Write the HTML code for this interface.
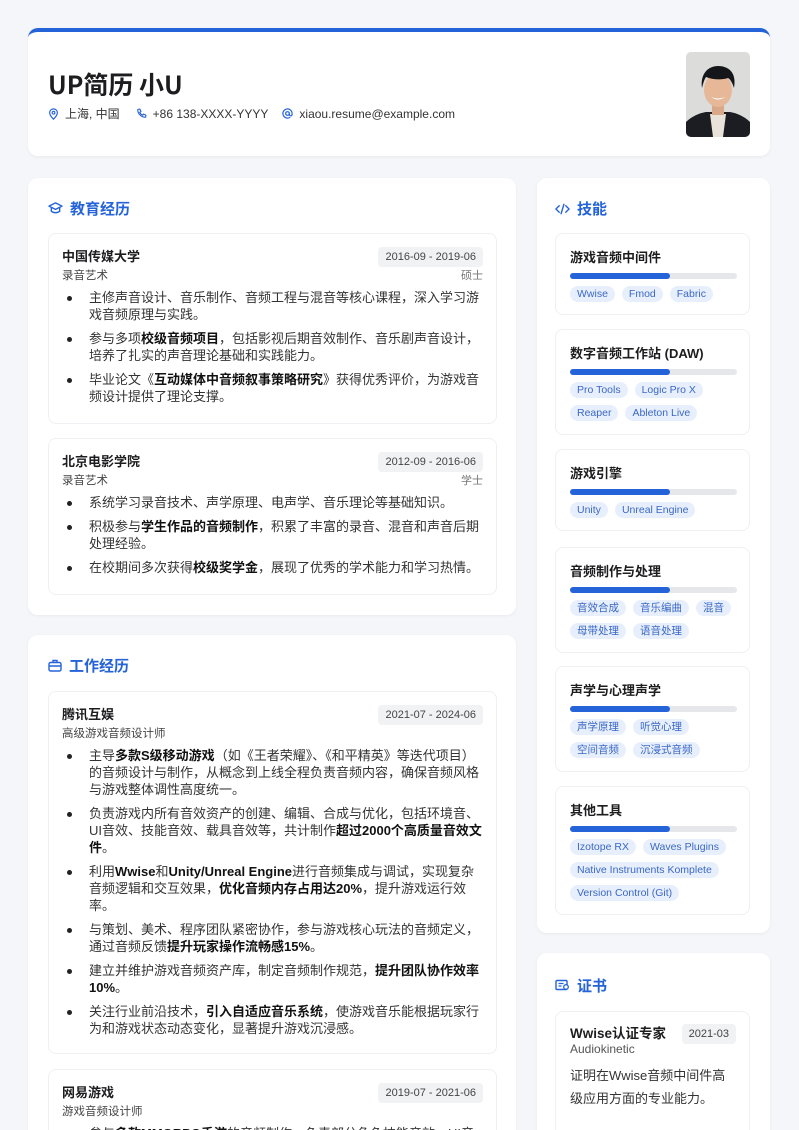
<!DOCTYPE html>
<html><head><meta charset="utf-8">
<style>
*{box-sizing:border-box;margin:0;padding:0}
html,body{width:799px;height:1130px;overflow:hidden}
body{background:#f4f6f9;font-family:"Liberation Sans","Noto Sans CJK SC",sans-serif;color:#222;position:relative}
.card{position:absolute;background:#fff;border-radius:10px;box-shadow:0 1px 3px rgba(0,0,0,.05)}
.hdr{left:28px;top:28px;width:742px;height:128px;border-top:4px solid #2563d9}
.name{position:absolute;left:20px;top:34px;font-size:25px;font-weight:bold;color:#1d1d1f;font-family:"Noto Sans CJK SC",sans-serif}
.contact{position:absolute;left:20px;top:73px;font-size:12px;color:#333;display:flex;gap:14px;align-items:center}
.contact span{display:flex;align-items:center;gap:6px}
.photo{position:absolute;left:658px;top:20px;width:64px;height:85px;border-radius:5px;overflow:hidden;background:#d8d8d6}
.sec-t{position:absolute;left:20px;font-size:15px;font-weight:bold;color:#2563d9;display:flex;align-items:center;gap:7px}
.ent{position:absolute;left:20px;width:449px;border:1px solid #eef0f3;border-radius:8px;overflow:hidden}
.et{position:absolute;left:13px;top:14px;line-height:18px;font-size:13px;font-weight:bold;color:#1d1d1f}
.es{position:absolute;left:13px;top:34px;line-height:16px;font-size:11.5px;color:#444}
.date{position:absolute;right:13px;top:13px;background:#f1f2f4;border-radius:4px;font-size:11px;color:#444;padding:2px 7px;line-height:16px}
.deg{position:absolute;right:13px;top:34px;line-height:16px;font-size:11px;color:#777}
ul{position:absolute;left:13px;top:55px;width:425px;list-style:none}
li{position:relative;padding-left:27px;font-size:13px;line-height:17px;color:#333;margin-bottom:7px}
li:before{content:"";position:absolute;left:5px;top:7px;width:5px;height:5px;border-radius:50%;background:#222}
b{color:#111}
.sk{position:absolute;left:18px;width:195px;border:1px solid #eef0f3;border-radius:8px}
.sk h4{position:absolute;left:14px;top:13px;font-size:13px;font-weight:bold;color:#1d1d1f}
.bar{position:absolute;left:14px;top:39px;width:167px;height:6px;border-radius:3px;background:#e5e7eb}
.bar i{display:block;width:100px;height:6px;border-radius:3px;background:#2563d9}
.tags{position:absolute;left:14px;top:52px;width:175px;display:flex;flex-wrap:wrap;gap:7px 7px}
.tags span{background:#e8effc;color:#3a68c4;font-size:10.5px;line-height:16px;padding:0 7px;border-radius:8px}
</style></head><body>

<div class="card hdr">
 <div class="name">UP简历 小U</div>
 <div class="contact">
  <span><svg width="11" height="12" viewBox="0 0 12 14"><path d="M6 13s4.5-4.5 4.5-7.5a4.5 4.5 0 0 0-9 0C1.5 8.5 6 13 6 13z" fill="none" stroke="#2563d9" stroke-width="1.4"/><circle cx="6" cy="5.5" r="1.6" fill="none" stroke="#2563d9" stroke-width="1.3"/></svg>上海, 中国</span>
  <span style="margin-left:2px"><svg width="11" height="11" viewBox="0 0 12 12"><path d="M2 1.5l2.2-.3 1.2 2.6-1.3 1a7 7 0 0 0 3.1 3.1l1-1.3 2.6 1.2-.3 2.2C6 10.5 1.5 6 2 1.5z" fill="none" stroke="#2563d9" stroke-width="1.2"/></svg>+86 138-XXXX-YYYY</span>
  <span><svg width="11" height="11" viewBox="0 0 12 12"><circle cx="6" cy="6" r="2" fill="none" stroke="#2563d9" stroke-width="1.3"/><path d="M8 6v1a1.5 1.5 0 0 0 3 0V6a5 5 0 1 0-2 4" fill="none" stroke="#2563d9" stroke-width="1.3"/></svg>xiaou.resume@example.com</span>
 </div>
 <div class="photo">
  <svg width="64" height="85" viewBox="0 0 64 85">
   <rect width="64" height="85" fill="#dcdcda"/>
   <path d="M0 85V70c6-6 14-9 20-10h24c6 1 14 4 20 10v15z" fill="#1b1d22"/>
   <path d="M24 62h16l-3 23h-10z" fill="#e8e2d8"/>
   <rect x="26" y="50" width="12" height="13" fill="#d9a888"/>
   <ellipse cx="32" cy="38" rx="14" ry="17" fill="#e6b898"/>
   <path d="M16 36c-2-14 6-22 16-22s19 6 16 22c-2-6-4-9-6-10-6 2-14 2-22-1-2 3-3 7-4 11z" fill="#15161a"/>
   <path d="M25 45q7 5 14 0q-7 3-14 0z" fill="#fff"/>
  </svg>
 </div>
</div>

<!-- Education -->
<div class="card" style="left:28px;top:178px;width:488px;height:437px">
 <div class="sec-t" style="top:20px"><svg width="15" height="13" viewBox="0 0 16 14"><path d="M8 1L1 4.5 8 8l7-3.5z M3.5 6v4c2.5 2 6.5 2 9 0V6" fill="none" stroke="#2563d9" stroke-width="1.5" stroke-linejoin="round"/></svg>教育经历</div>
 <div class="ent" style="top:55px;height:191px">
  <div class="et">中国传媒大学</div><div class="date">2016-09 - 2019-06</div>
  <div class="es">录音艺术</div><div class="deg">硕士</div>
  <ul>
   <li>主修声音设计、音乐制作、音频工程与混音等核心课程，深入学习游戏音频原理与实践。</li>
   <li>参与多项<b>校级音频项目</b>，包括影视后期音效制作、音乐剧声音设计，培养了扎实的声音理论基础和实践能力。</li>
   <li>毕业论文《<b>互动媒体中音频叙事策略研究</b>》获得优秀评价，为游戏音频设计提供了理论支撑。</li>
  </ul>
 </div>
 <div class="ent" style="top:260px;height:157px">
  <div class="et">北京电影学院</div><div class="date">2012-09 - 2016-06</div>
  <div class="es">录音艺术</div><div class="deg">学士</div>
  <ul>
   <li>系统学习录音技术、声学原理、电声学、音乐理论等基础知识。</li>
   <li>积极参与<b>学生作品的音频制作</b>，积累了丰富的录音、混音和声音后期处理经验。</li>
   <li>在校期间多次获得<b>校级奖学金</b>，展现了优秀的学术能力和学习热情。</li>
  </ul>
 </div>
</div>

<!-- Work -->
<div class="card" style="left:28px;top:635px;width:488px;height:520px">
 <div class="sec-t" style="top:20px"><svg width="14" height="13" viewBox="0 0 14 13"><rect x="1" y="3.5" width="12" height="8.5" rx="1.5" fill="none" stroke="#2563d9" stroke-width="1.4"/><path d="M5 3.5V1.5h4v2M1 7h12" fill="none" stroke="#2563d9" stroke-width="1.4"/></svg>工作经历</div>
 <div class="ent" style="top:56px;height:363px">
  <div class="et">腾讯互娱</div><div class="date">2021-07 - 2024-06</div>
  <div class="es">高级游戏音频设计师</div>
  <ul>
   <li>主导<b>多款S级移动游戏</b>（如《王者荣耀》、《和平精英》等迭代项目）的音频设计与制作，从概念到上线全程负责音频内容，确保音频风格与游戏整体调性高度统一。</li>
   <li>负责游戏内所有音效资产的创建、编辑、合成与优化，包括环境音、UI音效、技能音效、载具音效等，共计制作<b>超过2000个高质量音效文件</b>。</li>
   <li>利用<b>Wwise</b>和<b>Unity/Unreal Engine</b>进行音频集成与调试，实现复杂音频逻辑和交互效果，<b>优化音频内存占用达20%</b>，提升游戏运行效率。</li>
   <li>与策划、美术、程序团队紧密协作，参与游戏核心玩法的音频定义，通过音频反馈<b>提升玩家操作流畅感15%</b>。</li>
   <li>建立并维护游戏音频资产库，制定音频制作规范，<b>提升团队协作效率10%</b>。</li>
   <li>关注行业前沿技术，<b>引入自适应音乐系统</b>，使游戏音乐能根据玩家行为和游戏状态动态变化，显著提升游戏沉浸感。</li>
  </ul>
 </div>
 <div class="ent" style="top:434px;height:120px">
  <div class="et">网易游戏</div><div class="date">2019-07 - 2021-06</div>
  <div class="es">游戏音频设计师</div>
  <ul>
   <li>参与<b>多款MMORPG手游</b>的音频制作，负责部分角色技能音效、UI音效。</li>
  </ul>
 </div>
</div>

<!-- Skills -->
<div class="card" style="left:537px;top:178px;width:233px;height:755px">
 <div class="sec-t" style="top:20px;left:18px"><svg width="15" height="12" viewBox="0 0 16 12"><path d="M4.5 2.5L1 6l3.5 3.5M11.5 2.5L15 6l-3.5 3.5M9.5 1L6.5 11" fill="none" stroke="#2563d9" stroke-width="1.5" stroke-linecap="round"/></svg>技能</div>
 <div class="sk" style="top:55px;height:82px"><h4>游戏音频中间件</h4><div class="bar"><i></i></div><div class="tags"><span>Wwise</span><span>Fmod</span><span>Fabric</span></div></div>
 <div class="sk" style="top:151px;height:106px"><h4>数字音频工作站 (DAW)</h4><div class="bar"><i></i></div><div class="tags"><span>Pro Tools</span><span>Logic Pro X</span><span>Reaper</span><span>Ableton Live</span></div></div>
 <div class="sk" style="top:271px;height:82px"><h4>游戏引擎</h4><div class="bar"><i></i></div><div class="tags"><span>Unity</span><span>Unreal Engine</span></div></div>
 <div class="sk" style="top:369px;height:106px"><h4>音频制作与处理</h4><div class="bar"><i></i></div><div class="tags"><span>音效合成</span><span>音乐编曲</span><span>混音</span><span>母带处理</span><span>语音处理</span></div></div>
 <div class="sk" style="top:488px;height:106px"><h4>声学与心理声学</h4><div class="bar"><i></i></div><div class="tags"><span>声学原理</span><span>听觉心理</span><span>空间音频</span><span>沉浸式音频</span></div></div>
 <div class="sk" style="top:608px;height:129px"><h4>其他工具</h4><div class="bar"><i></i></div><div class="tags"><span>Izotope RX</span><span>Waves Plugins</span><span>Native Instruments Komplete</span><span>Version Control (Git)</span></div></div>
</div>

<!-- Certificates -->
<div class="card" style="left:537px;top:953px;width:233px;height:200px">
 <div class="sec-t" style="top:22px;left:18px"><svg width="15" height="13" viewBox="0 0 15 13"><rect x="1" y="1.5" width="11" height="9" rx="1" fill="none" stroke="#2563d9" stroke-width="1.4"/><path d="M3.5 4.5h5M3.5 7h3" stroke="#2563d9" stroke-width="1.3"/><circle cx="11" cy="8" r="2.3" fill="#fff" stroke="#2563d9" stroke-width="1.3"/></svg>证书</div>
 <div class="sk" style="top:58px;height:126px">
  <h4 style="font-size:13.5px;top:10px">Wwise认证专家</h4>
  <div class="date" style="top:12px;right:13px">2021-03</div>
  <div style="position:absolute;left:14px;top:30px;font-size:12px;color:#555">Audiokinetic</div>
  <div style="position:absolute;left:14px;top:52px;width:160px;font-size:13px;line-height:23px;color:#333">证明在Wwise音频中间件高级应用方面的专业能力。</div>
 </div>
</div>
</body></html>
